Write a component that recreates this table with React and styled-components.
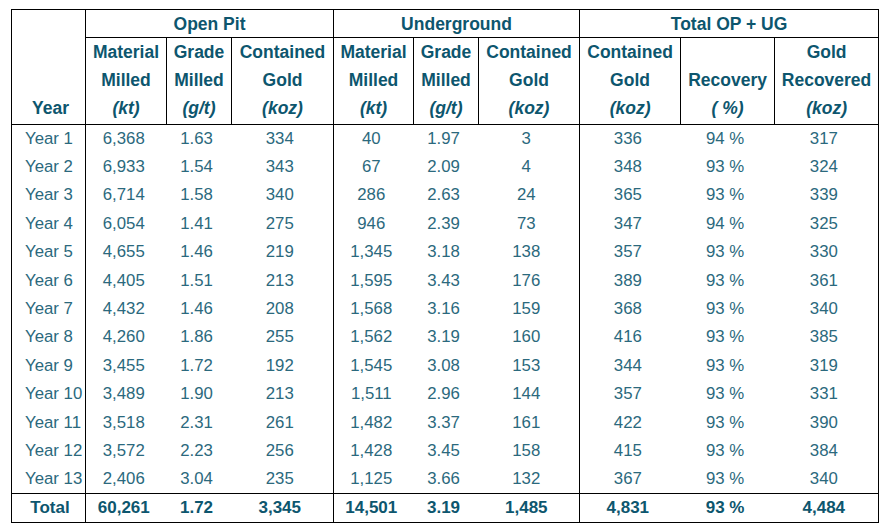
import React from "react";
import styled, { createGlobalStyle } from "styled-components";

const GlobalStyle = createGlobalStyle`
  body {
    margin: 0;
    background: #ffffff;
    font-family: "Liberation Sans", Arial, sans-serif;
  }
`;

const Page = styled.div`
  padding: 9px 0 0 11px;
`;

const Table = styled.table`
  border-collapse: collapse;
  table-layout: fixed;
  width: 868px;
  border: 1px solid #000;
`;

const Row = styled.tr`
  height: ${({ $h }) => $h}px;
`;

const GroupCell = styled.th`
  padding: 0;
  font-size: 17.5px;
  line-height: 20px;
  font-weight: 700;
  color: #0d566e;
  text-align: center;
  vertical-align: middle;
  border-left: ${({ $blank }) => ($blank ? "none" : "1px solid #000")};
  border-bottom: ${({ $blank }) => ($blank ? "none" : "1px solid #000")};
`;

const HeadCell = styled.th`
  padding: ${({ $first }) => ($first ? "0 0 2px 4px" : "0 0 2px")};
  font-size: 17.5px;
  line-height: 28px;
  font-weight: 700;
  color: #0d566e;
  text-align: center;
  vertical-align: bottom;
  border-left: ${({ $first }) => ($first ? "none" : "1px solid #000")};
  border-bottom: 1px solid #000;
  em {
    font-style: italic;
  }
`;

const Cell = styled.td`
  padding: ${({ $left }) => ($left ? "0 0 0 13px" : "0 5px 0 0")};
  font-size: ${({ $total }) => ($total ? "17px" : "16.8px")};
  line-height: 20px;
  font-weight: ${({ $total }) => ($total ? 700 : 400)};
  color: ${({ $total }) => ($total ? "#0d566e" : "#2b697d")};
  text-align: ${({ $left }) => ($left ? "left" : "center")};
  white-space: nowrap;
  border-left: ${({ $edge }) => ($edge ? "1px solid #000" : "none")};
  border-top: ${({ $total }) => ($total ? "1px solid #000" : "none")};
  &:first-child {
    padding-left: ${({ $total }) => ($total ? "8px" : "13px")};
  }
`;

const widths = [74, 81, 65, 102, 80, 65, 101, 101, 94, 104];

const rows = [
  ["Year 1", "6,368", "1.63", "334", "40", "1.97", "3", "336", "94 %", "317"],
  ["Year 2", "6,933", "1.54", "343", "67", "2.09", "4", "348", "93 %", "324"],
  ["Year 3", "6,714", "1.58", "340", "286", "2.63", "24", "365", "93 %", "339"],
  ["Year 4", "6,054", "1.41", "275", "946", "2.39", "73", "347", "94 %", "325"],
  ["Year 5", "4,655", "1.46", "219", "1,345", "3.18", "138", "357", "93 %", "330"],
  ["Year 6", "4,405", "1.51", "213", "1,595", "3.43", "176", "389", "93 %", "361"],
  ["Year 7", "4,432", "1.46", "208", "1,568", "3.16", "159", "368", "93 %", "340"],
  ["Year 8", "4,260", "1.86", "255", "1,562", "3.19", "160", "416", "93 %", "385"],
  ["Year 9", "3,455", "1.72", "192", "1,545", "3.08", "153", "344", "93 %", "319"],
  ["Year 10", "3,489", "1.90", "213", "1,511", "2.96", "144", "357", "93 %", "331"],
  ["Year 11", "3,518", "2.31", "261", "1,482", "3.37", "161", "422", "93 %", "390"],
  ["Year 12", "3,572", "2.23", "256", "1,428", "3.45", "158", "415", "93 %", "384"],
  ["Year 13", "2,406", "3.04", "235", "1,125", "3.66", "132", "367", "93 %", "340"],
];

const total = ["Total", "60,261", "1.72", "3,345", "14,501", "3.19", "1,485", "4,831", "93 %", "4,484"];

const heads = [
  ["Material", "Milled", "(kt)"],
  ["Grade", "Milled", "(g/t)"],
  ["Contained", "Gold", "(koz)"],
  ["Material", "Milled", "(kt)"],
  ["Grade", "Milled", "(g/t)"],
  ["Contained", "Gold", "(koz)"],
  ["Contained", "Gold", "(koz)"],
  ["Recovery", "( %)"],
  ["Gold", "Recovered", "(koz)"],
];

// group boundaries fall before columns 1, 4 and 7
const edges = [1, 4, 7];

export default function App() {
  return (
    <Page>
      <GlobalStyle />
      <Table>
        <colgroup>
          {widths.map((w, i) => (
            <col key={i} style={{ width: w }} />
          ))}
        </colgroup>
        <thead>
          <Row $h={28}>
            <GroupCell $blank />
            <GroupCell colSpan={3}>Open Pit</GroupCell>
            <GroupCell colSpan={3}>Underground</GroupCell>
            <GroupCell colSpan={3}>Total OP + UG</GroupCell>
          </Row>
          <Row $h={86}>
            <HeadCell $first>Year</HeadCell>
            {heads.map((lines, i) => (
              <HeadCell key={i}>
                {lines.map((l, j) => (
                  <React.Fragment key={j}>
                    {j === lines.length - 1 ? <em>{l}</em> : l}
                    {j < lines.length - 1 && <br />}
                  </React.Fragment>
                ))}
              </HeadCell>
            ))}
          </Row>
        </thead>
        <tbody>
          {rows.map((r, i) => (
            <Row key={i} $h={28.4}>
              {r.map((v, j) => (
                <Cell key={j} $left={j === 0} $edge={edges.includes(j)}>
                  {v}
                </Cell>
              ))}
            </Row>
          ))}
          <Row $h={29}>
            {total.map((v, j) => (
              <Cell key={j} $total $edge={edges.includes(j)}>
                {v}
              </Cell>
            ))}
          </Row>
        </tbody>
      </Table>
    </Page>
  );
}
